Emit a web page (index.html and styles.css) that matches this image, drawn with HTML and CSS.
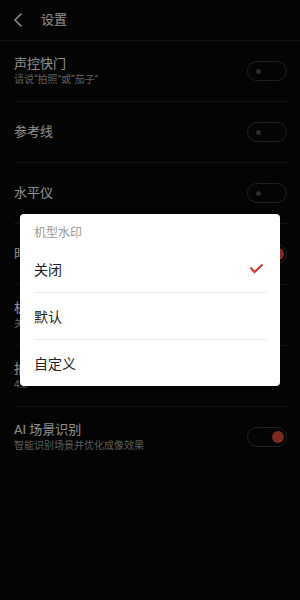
FILE: index.html
```html
<!DOCTYPE html>
<html lang="zh">
<head>
<meta charset="utf-8">
<link rel="stylesheet" href="styles.css">
</head>
<body>
<div class="page">
  <header class="header">
    <svg class="back" width="12" height="16" viewBox="0 0 12 16"><path d="M9.5 1.5 L3 8 L9.5 14.5" fill="none" stroke="#eaeaea" stroke-width="1.5"/></svg>
    <span class="title">设置</span>
  </header>
  <div class="list">
    <div class="row">
      <div class="texts"><div class="name">声控快门</div><div class="sub">请说“拍照”或“茄子”</div></div>
      <div class="toggle"><span class="knob off"></span></div>
    </div>
    <div class="row">
      <div class="texts"><div class="name">参考线</div></div>
      <div class="toggle"><span class="knob off"></span></div>
    </div>
    <div class="row">
      <div class="texts"><div class="name">水平仪</div></div>
      <div class="toggle"><span class="knob off"></span></div>
    </div>
    <div class="row">
      <div class="texts"><div class="name">时间水印</div></div>
      <div class="toggle on"><span class="knob"></span></div>
    </div>
    <div class="row">
      <div class="texts"><div class="name">机型水印</div><div class="sub">关闭</div></div>
    </div>
    <div class="row">
      <div class="texts"><div class="name">拍照比例</div><div class="sub">4:3</div></div>
    </div>
    <div class="row">
      <div class="texts"><div class="name">AI 场景识别</div><div class="sub">智能识别场景并优化成像效果</div></div>
      <div class="toggle on"><span class="knob"></span></div>
    </div>
  </div>
</div>
<div class="overlay">
  <div class="dialog">
    <div class="dtitle">机型水印</div>
    <div class="item"><span>关闭</span><svg class="check" width="16" height="12" viewBox="0 0 16 12"><path d="M1.5 4.5 L5.5 9 L13.5 1.5" fill="none" stroke="#d0392b" stroke-width="2"/></svg></div>
    <div class="item"><span>默认</span></div>
    <div class="item"><span>自定义</span></div>
  </div>
</div>
</body>
</html>
```
FILE: styles.css
```css
html, body {
  margin: 0;
  padding: 0;
  background: #080808;
  font-family: Roboto, "Noto Sans CJK SC", sans-serif;
}
.page {
  width: 300px;
  height: 600px;
  background: #080808;
}
.header {
  height: 40px;
  display: flex;
  align-items: center;
  border-bottom: 1px solid #202020;
}
.back {
  margin-left: 12px;
  margin-right: 17px;
}
.title {
  color: #ededed;
  font-size: 13px;
  line-height: 16px;
}
.list {
  padding: 0 13px 0 14px;
}
.row {
  height: 60px;
  display: flex;
  align-items: center;
  justify-content: space-between;
  border-bottom: 1px solid #202020;
}
.row:last-child {
  border-bottom: none;
}
.texts {
  display: flex;
  flex-direction: column;
}
.name {
  color: #ededed;
  font-size: 13px;
  line-height: 18px;
}
.sub {
  color: #999;
  font-size: 10px;
  line-height: 14px;
}
.toggle {
  box-sizing: border-box;
  width: 40px;
  height: 20px;
  border: 1.5px solid #343434;
  border-radius: 10px;
  display: flex;
  align-items: center;
  padding: 0 2px;
}
.knob {
  width: 12px;
  height: 12px;
  border-radius: 50%;
  background: #d04639;
  margin-left: auto;
}
.knob.off {
  width: 5px;
  height: 5px;
  background: #484848;
  margin-left: 6px;
}
.overlay {
  position: fixed;
  inset: 0;
  background: rgba(0, 0, 0, 0.4);
}
.dialog {
  position: absolute;
  left: 20px;
  top: 214px;
  width: 260px;
  background: #fff;
  border-radius: 4px;
  padding: 0 13px 0 14px;
  box-sizing: border-box;
}
.dtitle {
  color: #999;
  font-size: 12px;
  line-height: 16px;
  padding: 11px 0 5px;
}
.item {
  height: 46px;
  display: flex;
  align-items: center;
  justify-content: space-between;
  color: #222;
  font-size: 14px;
  border-bottom: 1px solid #ececec;
}
.item:last-child {
  border-bottom: none;
}
.check {
  margin-right: 2px;
}
```
